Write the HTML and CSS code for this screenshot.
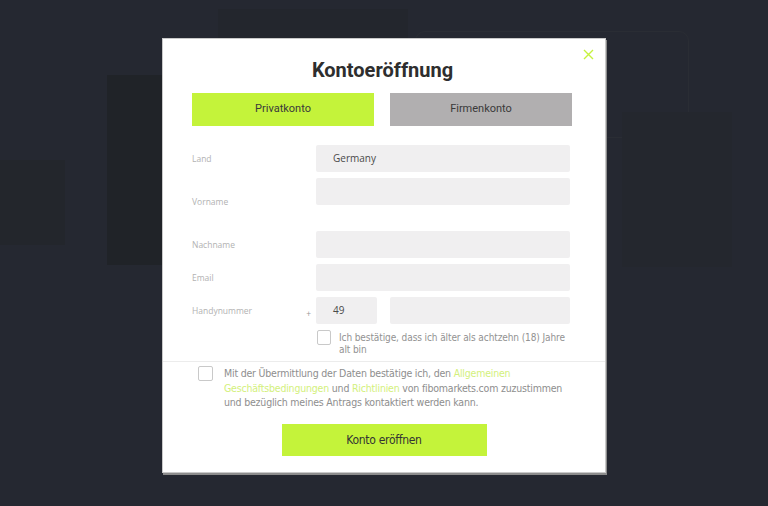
FILE: index.html
```html
<!DOCTYPE html>
<html lang="de">
<head>
<meta charset="utf-8">
<title>Kontoeröffnung</title>
<link rel="stylesheet" href="styles.css">
</head>
<body>
<div class="backdrop" aria-hidden="true">
  <div class="shade shade-top"></div>
  <div class="shade shade-frame"></div>
  <div class="shade shade-side"></div>
  <div class="shade shade-left"></div>
  <div class="shade shade-panel"></div>
</div>

<div class="modal">
  <button class="close" type="button" aria-label="Schließen">
    <svg width="11" height="11" viewBox="0 0 11 11"><path d="M1 1L10 10M10 1L1 10" stroke="#c6f23e" stroke-width="1.4" fill="none"/></svg>
  </button>

  <h1 class="title">Kontoeröffnung</h1>

  <div class="tabs">
    <button class="tab tab-active" type="button">Privatkonto</button>
    <button class="tab" type="button">Firmenkonto</button>
  </div>

  <form class="form">
    <div class="row">
      <span class="label">Land</span>
      <div class="field">Germany</div>
    </div>
    <div class="row row-tall">
      <span class="label">Vorname</span>
      <div class="field"></div>
    </div>
    <div class="row">
      <span class="label">Nachname</span>
      <div class="field"></div>
    </div>
    <div class="row">
      <span class="label">Email</span>
      <div class="field"></div>
    </div>
    <div class="row">
      <span class="label label-phone">Handynummer <span class="plus">+</span></span>
      <div class="phone">
        <div class="field field-code">49</div>
        <div class="field"></div>
      </div>
    </div>
    <div class="row row-check">
      <span></span>
      <label class="check">
        <span class="box"></span>
        <span class="check-text">Ich bestätige, dass ich älter als achtzehn (18) Jahre alt bin</span>
      </label>
    </div>
  </form>

  <div class="divider"></div>

  <label class="consent">
    <span class="box box-lg"></span>
    <span class="consent-text">Mit der Übermittlung der Daten bestätige ich, den <a class="link">Allgemeinen Geschäftsbedingungen</a> und <a class="link">Richtlinien</a> von fibomarkets.com zuzustimmen und bezüglich meines Antrags kontaktiert werden kann.</span>
  </label>

  <div class="actions">
    <button class="submit" type="button">Konto eröffnen</button>
  </div>
</div>
</body>
</html>
```
FILE: styles.css
```css
html, body {
  margin: 0;
  height: 100%;
}

body {
  background: #252831;
  overflow: hidden;
  position: relative;
  font-family: "Open Sans", "Liberation Sans", sans-serif;
}

/* dimmed page behind the dialog */
.backdrop {
  position: absolute;
  inset: 0;
}
.shade {
  position: absolute;
}
.shade-top {
  left: 218px; top: 9px; width: 190px; height: 30px;
  background: #23262d;
}
.shade-frame {
  left: 415px; top: 31px; width: 272px; height: 105px;
  border: 1px solid #2a2d34;
  border-radius: 10px;
}
.shade-side {
  left: 107px; top: 75px; width: 60px; height: 190px;
  background: #202328;
}
.shade-left {
  left: 0; top: 160px; width: 65px; height: 85px;
  background: #23262c;
}
.shade-panel {
  left: 622px; top: 112px; width: 110px; height: 155px;
  background: #24272e;
}

/* dialog */
.modal {
  position: relative;
  box-sizing: border-box;
  width: 442px;
  height: 433px;
  margin: 39px auto 0;
  padding: 19px 32px 0 29px;
  background: #fff;
  box-shadow: 0 0 0 1px #c9c9c9, 1px 2px 0 1px #8c8c8c;
}

.close {
  position: absolute;
  top: 10px;
  right: 11px;
  padding: 0;
  border: 0;
  background: none;
  line-height: 0;
}

.title {
  margin: 0;
  text-align: center;
  font-family: Roboto, "Liberation Sans", sans-serif;
  font-weight: 700;
  font-size: 20px;
  line-height: 25px;
  color: #2e2e2e;
}

.tabs {
  display: grid;
  grid-template-columns: 182px 182px;
  column-gap: 16px;
  margin-top: 10px;
}
.tab {
  height: 33px;
  border: 0;
  padding: 0 0 3px;
  font-family: Roboto, "Liberation Sans", sans-serif;
  font-size: 11px;
  color: #3a3a3a;
  background: #b1afb0;
}
.tab-active {
  background: #c4f33a;
}

/* form rows */
.form {
  display: flex;
  flex-direction: column;
  gap: 6px;
  margin-top: 19px;
}
.row {
  display: grid;
  grid-template-columns: 124px 254px;
  align-items: center;
  min-height: 27px;
}
.row-tall {
  height: 47px;
  align-items: start;
}
.row-tall .label {
  align-self: center;
}
.label {
  font-size: 8.5px;
  color: #b2b2b2;
}
.label-phone {
  display: flex;
  justify-content: space-between;
  padding-right: 5px;
  padding-top: 3px;
}
.plus {
  padding-top: 3px;
  color: #9a9a9a;
}

.field {
  box-sizing: border-box;
  height: 27px;
  padding-left: 17px;
  background: #f0eff0;
  border-radius: 2px;
  font-size: 10px;
  line-height: 27px;
  color: #4a4a4a;
}
.phone {
  display: grid;
  grid-template-columns: 61px 1fr;
  column-gap: 13px;
}

.row-check {
  align-items: start;
}
.check {
  display: flex;
  gap: 8px;
  padding-left: 1px;
}
.box {
  flex: none;
  box-sizing: border-box;
  width: 14px;
  height: 15px;
  border: 1.5px solid #c9c9c9;
  border-radius: 2px;
  background: #fff;
}
.check-text {
  padding-top: 2px;
  font-family: "DejaVu Sans Condensed", "Liberation Sans", sans-serif;
  font-size: 10px;
  letter-spacing: -0.1px;
  line-height: 11.5px;
  color: #929292;
}

.divider {
  height: 1px;
  margin: 4px -32px 0 -29px;
  background: #ececec;
}

.consent {
  display: flex;
  gap: 11px;
  margin-top: 4px;
  padding-left: 6px;
}
.box-lg {
  margin-top: 0;
  width: 15px;
}
.consent-text {
  width: 340px;
  font-family: "DejaVu Sans Condensed", "Liberation Sans", sans-serif;
  font-size: 10.5px;
  letter-spacing: -0.2px;
  line-height: 14.5px;
  color: #8e8e8e;
}
.link {
  color: #d3f07c;
}

.actions {
  display: flex;
  justify-content: center;
  margin-top: 14px;
  margin-left: 3px;
}
.submit {
  width: 205px;
  height: 32px;
  border: 0;
  padding: 0;
  background: #c4f33a;
  font-family: "DejaVu Sans Condensed", "Liberation Sans", sans-serif;
  font-size: 12px;
  letter-spacing: -0.3px;
  color: #333;
}
```
